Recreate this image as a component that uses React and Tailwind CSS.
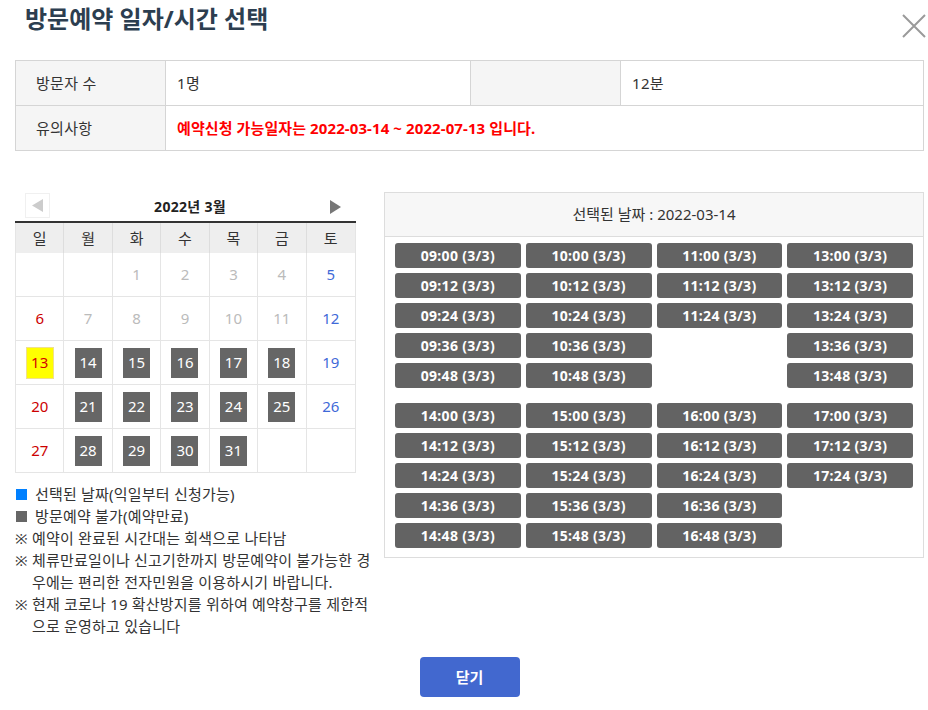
import React from "react";

const FONT = { fontFamily: '"Noto Sans", "Noto Sans CJK KR", sans-serif' };

const weeks = [
  [null, null, 1, 2, 3, 4, 5],
  [6, 7, 8, 9, 10, 11, 12],
  [13, 14, 15, 16, 17, 18, 19],
  [20, 21, 22, 23, 24, 25, 26],
  [27, 28, 29, 30, 31, null, null],
];

const group1 = [
  ["09:00", "10:00", "11:00", "13:00"],
  ["09:12", "10:12", "11:12", "13:12"],
  ["09:24", "10:24", "11:24", "13:24"],
  ["09:36", "10:36", null, "13:36"],
  ["09:48", "10:48", null, "13:48"],
];
const group2 = [
  ["14:00", "15:00", "16:00", "17:00"],
  ["14:12", "15:12", "16:12", "17:12"],
  ["14:24", "15:24", "16:24", "17:24"],
  ["14:36", "15:36", "16:36", null],
  ["14:48", "15:48", "16:48", null],
];

function DayCell({ d, col }) {
  let content = null;
  if (d !== null) {
    if (d === 13) {
      content = (
        <span className="flex h-[32px] w-[28px] items-center justify-center border border-[#f0e08c] bg-[#ffff00] text-[#d40000]">
          {d}
        </span>
      );
    } else if (d >= 14 && col >= 1 && col <= 5) {
      content = (
        <span className="flex h-[30px] w-[27px] items-center justify-center bg-[#666666] text-white">
          {d}
        </span>
      );
    } else if (col === 0) {
      content = <span className="text-[#cc0000]">{d}</span>;
    } else if (col === 6) {
      content = <span className="text-[#3f6ad8]">{d}</span>;
    } else {
      content = <span className="text-[#bbbbbb]">{d}</span>;
    }
  }
  return (
    <div className="flex h-[44px] items-center justify-center border-r border-b border-[#e5e5e5] text-[15px] last:border-r-0">
      {content}
    </div>
  );
}

function TimeGrid({ rows }) {
  return (
    <div className="grid grid-cols-4 gap-x-[5px] gap-y-[5px]">
      {rows.flat().map((t, i) =>
        t ? (
          <div
            key={i}
            className="flex h-[25px] items-center justify-center rounded-[3px] bg-[#636363] text-[14px] font-bold tracking-[0.3px] text-white"
          >
            {t} (3/3)
          </div>
        ) : (
          <div key={i} className="h-[25px]" />
        )
      )}
    </div>
  );
}

export default function App() {
  return (
    <div className="relative h-[710px] w-[928px] bg-white text-[#333333]" style={FONT}>
      {/* Header */}
      <div className="relative h-[60px]">
        <h1 className="pl-[25px] pt-[2px] text-[24px] font-bold leading-[34px] text-[#2c3e50]">
          방문예약 일자/시간 선택
        </h1>
        <button className="absolute right-[2px] top-[14px] h-[24px] w-[24px]">
          <svg width="24" height="24" viewBox="0 0 24 24">
            <path d="M1 1 L23 23 M23 1 L1 23" stroke="#9a9a9a" strokeWidth="2" fill="none" />
          </svg>
        </button>
      </div>

      <div className="pl-[15px] pr-[4px]">
        {/* Info table */}
        <div className="grid grid-cols-[150px_305px_150px_1fr] border border-[#d5d5d5] text-[15px] tracking-[0.3px]">
          <div className="flex h-[45px] items-center border-r border-b border-[#d5d5d5] bg-[#f5f5f5] pl-[20px]">
            방문자 수
          </div>
          <div className="flex h-[45px] items-center border-r border-b border-[#d5d5d5] pl-[11px]">
            1명
          </div>
          <div className="flex h-[45px] items-center border-r border-b border-[#d5d5d5] bg-[#f5f5f5]" />
          <div className="flex h-[45px] items-center border-b border-[#d5d5d5] pl-[11px]">12분</div>
          <div className="flex h-[44px] items-center border-r border-[#d5d5d5] bg-[#f5f5f5] pl-[20px]">
            유의사항
          </div>
          <div className="col-span-3 flex h-[44px] items-center pl-[11px] font-bold tracking-[0.1px] text-[#ff0000]">
            예약신청 가능일자는 2022-03-14 ~ 2022-07-13 입니다.
          </div>
        </div>

        {/* Content */}
        <div className="mt-[41px] flex">
          {/* Left column */}
          <div className="w-[369px] shrink-0">
            <div className="mt-[1px] w-[341px]">
              <div className="flex h-[30px] items-start justify-between border-b-2 border-[#333333] pl-[10px] pr-[15px]">
                <div className="flex h-[25px] w-[25px] items-center justify-center border border-[#f0f0f0]">
                  <svg width="12" height="13" viewBox="0 0 12 13">
                    <polygon points="11,0 11,13 0,6.5" fill="#cccccc" />
                  </svg>
                </div>
                <div className="flex h-[27px] items-center text-[14px] font-bold tracking-[0.3px] text-[#222222]">
                  2022년 3월
                </div>
                <div className="flex h-[27px] items-center">
                  <svg width="11" height="14" viewBox="0 0 11 14">
                    <polygon points="0,0 0,14 11,7" fill="#777777" />
                  </svg>
                </div>
              </div>
              <div className="border-x border-[#e5e5e5]">
                <div className="grid grid-cols-7 bg-[#eeeeee]">
                  {["일", "월", "화", "수", "목", "금", "토"].map((d) => (
                    <div
                      key={d}
                      className="flex h-[30px] items-center justify-center border-r border-[#dddddd] text-[15px] text-[#333333] last:border-r-0"
                    >
                      {d}
                    </div>
                  ))}
                </div>
                {weeks.map((w, wi) => (
                  <div key={wi} className="grid grid-cols-7">
                    {w.map((d, ci) => (
                      <DayCell key={ci} d={d} col={ci} />
                    ))}
                  </div>
                ))}
              </div>
            </div>

            {/* Legend */}
            <div className="mt-[10px] whitespace-nowrap text-[15px] leading-[22px] tracking-[0.2px] text-[#333333]">
              <div className="flex items-center">
                <span className="ml-[1px] mr-[8px] inline-block h-[11px] w-[11px] bg-[#0080ff]" />
                선택된 날짜(익일부터 신청가능)
              </div>
              <div className="flex items-center">
                <span className="ml-[1px] mr-[8px] inline-block h-[11px] w-[11px] bg-[#666666]" />
                방문예약 불가(예약만료)
              </div>
              <div className="flex">
                <span className="w-[17px] shrink-0">※</span>
                <span>예약이 완료된 시간대는 회색으로 나타남</span>
              </div>
              <div className="flex">
                <span className="w-[17px] shrink-0">※</span>
                <span>
                  체류만료일이나 신고기한까지 방문예약이 불가능한 경
                  <br />
                  우에는 편리한 전자민원을 이용하시기 바랍니다.
                </span>
              </div>
              <div className="flex">
                <span className="w-[17px] shrink-0">※</span>
                <span>
                  현재 코로나 19 확산방지를 위하여 예약창구를 제한적
                  <br />
                  으로 운영하고 있습니다
                </span>
              </div>
            </div>
          </div>

          {/* Right panel */}
          <div className="h-[366px] w-[540px] border border-[#dddddd]">
            <div className="flex h-[44px] items-center justify-center border-b border-[#dddddd] bg-[#f7f7f7] text-[15px] text-[#333333]">
              선택된 날짜 : 2022-03-14
            </div>
            <div className="px-[10px] pt-[6px]">
              <TimeGrid rows={group1} />
              <div className="mt-[15px]">
                <TimeGrid rows={group2} />
              </div>
            </div>
          </div>
        </div>

        {/* Close button */}
        <div className="mt-[20px] flex justify-center">
          <button className="h-[40px] w-[100px] rounded-[4px] bg-[#4268cf] text-[15px] font-bold text-white">
            닫기
          </button>
        </div>
      </div>
    </div>
  );
}
